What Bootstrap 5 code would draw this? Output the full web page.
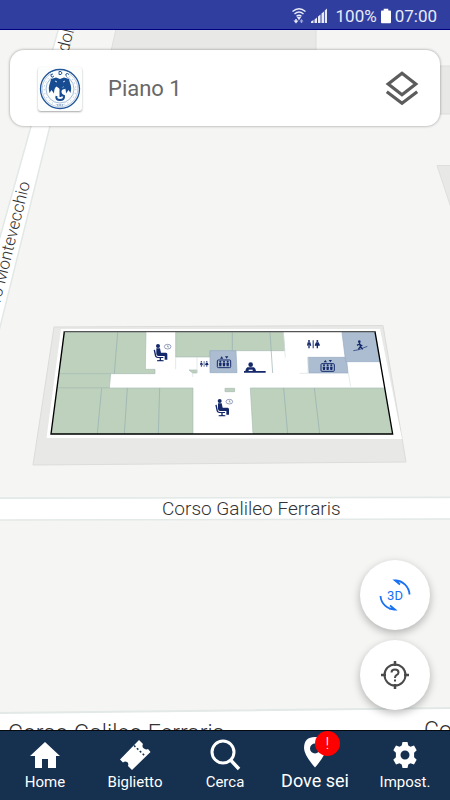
<!DOCTYPE html>
<html lang="it">
<head>
<meta charset="utf-8">
<meta name="viewport" content="width=device-width, initial-scale=1">
<title>Mappa - Piano 1</title>
<link href="https://cdn.jsdelivr.net/npm/bootstrap@5.3.0/dist/css/bootstrap.min.css" rel="stylesheet">
<style>
body { font-family: Roboto, "Liberation Sans", sans-serif; background: #f5f5f4; }
.status-bar { height: 30px; background: #303f9f; border-bottom: 1px solid #000080; color: #e8eaf6; font-size: 17px; line-height: 20px; padding: 3px 13px 0 0; }
.map-area { min-height: 0; }
.map-canvas { z-index: 0; }
.map-label { font-family: Roboto, "Open Sans", sans-serif; font-weight: 300; fill: #333; }
.floor-card { z-index: 1; margin: 20px 10px 0; height: 76px; border-radius: 14px; box-shadow: 0 0 3px rgba(0,0,0,.4); padding: 2px 20px 0 28px; }
.floor-logo { width: 44px; height: 44px; border-radius: 3px; background: #fcfefe; box-shadow: 0 1px 2px rgba(0,0,0,.35); }
.floor-title { font-size: 22px; line-height: 26px; color: #686868; margin-left: 26px; }
.fab-stack { right: 20px; bottom: 20px; z-index: 1; gap: 10px; }
.fab { width: 70px; height: 70px; box-shadow: 0 3px 9px rgba(0,0,0,.28); }
.tab-bar { height: 70px; background: #16304f; border-top: 1px solid #05080c; z-index: 2; }
.tab-item { color: #fff; font-size: 15px; line-height: 20px; padding: 7px 0; }
.tab-item.current { font-size: 18px; padding-top: 6px; }
.tab-item svg { width: 34px; height: 34px; flex: none; }
.alert-dot { width: 25px; height: 25px; background: #f00; color: #fff; font-size: 17px; font-weight: 300; line-height: 25px; left: 50%; top: 0; }
</style>
<script src="https://cdn.jsdelivr.net/npm/bootstrap@5.3.0/dist/js/bootstrap.bundle.min.js"></script>
</head>
<body class="vh-100 d-flex flex-column overflow-hidden">
<header class="status-bar d-flex align-items-center justify-content-end flex-shrink-0">
  <svg class="me-1" width="16" height="18" viewBox="0 0 16 18" fill="none" stroke="#e8eaf6" stroke-width="1.4" aria-hidden="true"><path d="M1.500 4.500Q8-1 14.500 4.500M3.500 7Q8 3 12.500 7M5.500 9.300Q8 7.300 10.500 9.300"/><path d="M7 10.500h2l-1 1.500z" fill="#e8eaf6"/><path d="M5 12v3" /><path d="M2.500 13.500h5L5 16.500z" fill="#e8eaf6" stroke="none"/><path d="M10.500 16v-2" stroke="#9fa8da"/><path d="M8.500 14.500h4l-2-2.500z" fill="#9fa8da" stroke="none"/></svg>
  <svg width="17" height="16" viewBox="0 0 17 16" fill="#e8eaf6" aria-hidden="true"><path d="M0 13.500L2.500 12v3H0zM3.500 11.500l2.500-2V15H3.500zM7 8.500l2.500-2V15H7zM10.500 5.500L13 3.500V15h-2.500zM13.800 2.500L16 .5V15h-2.200z"/></svg>
  <span class="ms-1 ps-1">100%</span>
  <svg class="mx-1" width="10" height="16" viewBox="0 0 11 16" fill="#fff" aria-hidden="true"><path d="M3 0h5v2h2q1 0 1 1v12q0 1-1 1H1q-1 0-1-1V3q0-1 1-1h2z"/></svg>
  <time>07:00</time>
</header>

<main class="map-area position-relative flex-grow-1">
  <svg class="map-canvas position-absolute top-0 start-0 w-100 h-100" viewBox="0 30 450 700" preserveAspectRatio="xMidYMid slice" role="img" aria-label="Mappa del piano 1">
    <path d="M-200 0h850v760h-850z" fill="#f5f5f4"/>
    <g fill="#e8e8e7" stroke="#dededd" stroke-width="1">
      <path d="M116 29H316V66H460V114H390L100 100z"/>
      <path d="M437 165.500H460V235z"/>
    </g>
    <path d="M0 237L30 130 61 20H76L49 130 0 327-40 488V380z" fill="#fff" stroke="#e2e8e6" stroke-width="1.500"/>
    <path d="M-200 498.500L650 497V518.500L-200 520.500z" fill="#fff" stroke="#e2e9e7" stroke-width="1.600"/>
    <path d="M-200 715L0 713 450 708 650 706V780H-200z" fill="#fff" stroke="#e2e9e7" stroke-width="2"/>
    <g class="map-label">
      <text x="162" y="515" font-size="19">Corso Galileo Ferraris</text>
      <text x="8" y="741" font-size="23">Corso Galileo Ferraris</text>
      <text x="424" y="738" font-size="23">Corso</text>
      <text transform="translate(30 183) rotate(-76)" text-anchor="end" font-size="17">ro Montevecchio</text>
      <text transform="translate(66 62) rotate(-76)" font-size="17">odol</text>
    </g>

    <path d="M54 327L383 325.500 406 462 33 465z" fill="#e8e8e7" stroke="#dcdcdb"/>
    <path d="M61 329H380L402 439 46.500 438z" fill="#fff"/>
    <g transform="translate(25 315) scale(.33333)">
      <g fill="#bed1bd" stroke="#a8bdb3" stroke-width="2">
        <path d="M118 52H363L361 163H390V176H103z"/>
        <path d="M452 52H775L779 107H555V126H452z"/>
        <path d="M103 176H257L253 219H97z"/>
        <path d="M97 219H504V356H80z"/>
        <path d="M676 219H1078L1101 356H684z"/>
        <path d="M492 165H516V174H503zM600 220H629V230H600z"/>
      </g>
      <g fill="#acbdd1" stroke="#95abc1" stroke-width="2">
        <path d="M555 107H633L636 173H555z"/>
        <path d="M849 127H964L969 174H852z"/>
        <path d="M951 52H1050L1064 140H962z"/>
      </g>
      <path d="M278 52L268 176M230 219L217 356M307 219L298 356M404 219L400 356M622 52V107M735 52L743 174M776 219L788 356M868 219L884 356" fill="none" stroke="#94adb0" stroke-width="2"/>
      <path d="M516 126V174M452 126V163M775 52L781 128M849 127V174M970 174L977 215M503 174V186M824 175H852" fill="none" stroke="#d5dfe3" stroke-width="2"/>
      <path d="M118 50L78 357H1103L1050 50" fill="none" stroke="#000" stroke-width="4"/>
      <path d="M116 50H1052" stroke="#555" stroke-width="4"/>
      <defs>
        <g id="waiting" fill="#14286a">
          <circle cx="13" cy="6" r="6"/>
          <path d="M8 13L19 13 22 26H37Q41 26 41 31V47H33V36H14Q9 36 8 30z"/>
          <path d="M0 18L4 17 8 36Q10 39 14 39H29V42H22V48L30 49V52H10V49L18 48V42H12Q6 42 4 37z"/>
          <path d="M32 8Q32 1 42 1T52 8 42 15 32 8zM42 4V9H46" fill="none" stroke="#62719b" stroke-width="2"/>
        </g>
        <g id="lift">
          <path d="M4 12H38Q41 12 41 15V32Q41 35 38 35H4Q1 35 1 32V15Q1 12 4 12z" fill="none" stroke="#14286a" stroke-width="3"/>
          <path d="M9 8L14 1 19 8zM24 1H34L29 8z" fill="#14286a"/>
          <g fill="#14286a"><circle cx="10" cy="17" r="3"/><circle cx="21" cy="17" r="3"/><circle cx="32" cy="17" r="3"/><path d="M6 21H14L13 31H7zM17 21H25L24 31H18zM28 21H36L35 31H29z"/></g>
        </g>
        <g id="restroom" fill="#14286a">
          <circle cx="6" cy="3" r="3"/><path d="M2 7H10L13 17 10 18 8 13 8 25H4V13L2 18 0 16z"/>
          <path d="M17 1H20V25H17z"/>
          <circle cx="31" cy="3" r="3"/><path d="M27 7H35L39 16 36 18 35 17H33V25H29V17H27L25 18 23 16z"/>
        </g>
      </defs>
      <use href="#waiting" x="386" y="87"/>
      <use href="#waiting" x="571" y="252"/>
      <use href="#lift" x="576" y="123"/>
      <use href="#lift" x="887" y="134"/>
      <use href="#restroom" x="846" y="75"/>
      <use href="#restroom" transform="translate(525 138) scale(.66 .7)"/>
      <g fill="#14286a"><circle cx="677" cy="149" r="7"/><path d="M667 157H687Q692 161 693 168H722V173H657V168H661Q662 160 667 157z"/><path d="M671 164H683V168H671z" fill="#fff"/></g>
      <g fill="none" stroke="#14286a" stroke-width="4"><circle cx="1003" cy="80" r="2"/><path d="M1003 84L1007 96 1013 103M1006 95L1000 103M996 91L1003 87 1012 93"/><path d="M985 107L1002 104 1027 94" stroke-width="2"/></g>
    </g>
  </svg>

  <section class="floor-card bg-white position-relative d-flex align-items-center">
    <div class="floor-logo d-flex align-items-center justify-content-center flex-shrink-0">
      <svg width="42" height="42" viewBox="0 0 42 42" fill="none" stroke="#24569a" aria-hidden="true">
        <circle cx="21" cy="21" r="19.500" stroke-width="1.300"/><circle cx="21" cy="21" r="17.800" stroke-width=".5" stroke="#7f9fc8"/>
        <circle cx="21" cy="21" r="14" stroke-width=".7" stroke="#7f9fc8"/><circle cx="21" cy="21" r="15.800" stroke-width=".7" stroke="#7f9fc8" stroke-dasharray="1 3"/>
        <path d="M12 4.500Q21 1 30 4.500V9H12z" fill="#fcfefe" stroke="none"/>
        <g stroke-width="1"><path d="M14 6q-3 0-2 2t3 0M20 3.500h2q2 1.500 0 3h-2zM30 6.500q-2-2-3-.5t1 2.500"/></g>
        <path d="M17 9.500L21 11 25 9.500 30 11 31 15Q33 19 31.500 25L29.500 22 27 25.500Q27 20 24.500 18.500L21 21 17.500 18.500Q15 20 15 25.500L12.500 22 10.500 25Q9 19 11 15L12 11z" fill="#174c92" stroke="none"/>
        <path d="M16 13l2 1M26 13l-2 1" stroke="#fff" stroke-width=".8"/>
        <path d="M26 20Q21.500 20 21.500 23.500T25 28Q25.500 32 21 32T17.500 28M21.500 17V29" stroke="#174c92" stroke-width="2"/>
        <path d="M18 37h6" stroke-width=".8" stroke-dasharray="1.500 .8"/>
      </svg>
    </div>
    <h1 class="floor-title fw-normal mb-0 me-auto">Piano 1</h1>
    <button type="button" class="btn border-0 p-0 lh-1" aria-label="Scegli piano">
      <svg width="36" height="36" viewBox="0 0 36 36" fill="none" stroke="#5c5c5c" stroke-width="3.200" aria-hidden="true"><path d="M18 2.300L31.800 13 18 23.700 4.200 13z"/><path d="M2.800 20.800L18 32.200 33.200 20.800"/></svg>
    </button>
  </section>

  <div class="fab-stack position-absolute d-flex flex-column">
    <button type="button" class="fab btn bg-white border-0 rounded-circle p-0" aria-label="Vista 3D">
      <svg width="34" height="34" viewBox="0 0 34 34" fill="none" stroke="#1872f2" stroke-width="1.800" aria-hidden="true"><path d="M31.500 16.500A14.500 14.500 0 0 0 17 2.500L22 6.500M17.500 2.500L23 3.500M2.500 18A14.500 14.500 0 0 0 17 31.500L12 27.500M16.500 31.500L11 30.500"/><text x="17" y="22" text-anchor="middle" font-size="13" fill="#1872f2" stroke="none">3D</text></svg>
    </button>
    <button type="button" class="fab btn bg-white border-0 rounded-circle p-0" aria-label="La mia posizione">
      <svg width="30" height="30" viewBox="0 0 30 30" fill="none" stroke="#4a4a4a" stroke-width="2" aria-hidden="true"><circle cx="15" cy="15" r="10.500"/><path d="M15 1V6M15 24V29M1 15H6M24 15H29" stroke-width="2.500"/><path d="M11.500 12.500Q11.500 9.500 15 9.500T18.500 12.500Q18.500 14 16.500 15.200 15 16.200 15 18M15 19.500V21.500"/></svg>
    </button>
  </div>
</main>

<nav class="tab-bar row g-0 flex-shrink-0 position-relative text-center" aria-label="Principale">
  <a href="#" class="tab-item col d-flex flex-column align-items-center text-decoration-none">
    <svg viewBox="0 0 34 34" fill="#fff" aria-hidden="true"><path d="M17 4L32 18H28V30H20V21H14V30H7V18H2z"/></svg>
    <span>Home</span>
  </a>
  <a href="#" class="tab-item col d-flex flex-column align-items-center text-decoration-none">
    <svg viewBox="0 0 34 34" fill="#fff" aria-hidden="true"><path d="M21 2L25 6Q23.500 9 26 10.500T30 11L32.500 14 14 32 10 28Q11 25 9 24T5 24.500L2 21.500z"/><path d="M16 7.500L27 18" stroke="#16304f" stroke-width="1.500" stroke-dasharray="2 2"/></svg>
    <span>Biglietto</span>
  </a>
  <a href="#" class="tab-item col d-flex flex-column align-items-center text-decoration-none">
    <svg viewBox="0 0 34 34" fill="none" stroke="#fff" aria-hidden="true"><circle cx="15" cy="14" r="11" stroke-width="3"/><path d="M22.500 22L31 31" stroke-width="3.500"/></svg>
    <span>Cerca</span>
  </a>
  <a href="#" class="tab-item current col d-flex flex-column align-items-center text-decoration-none position-relative" aria-current="page">
    <svg viewBox="0 0 34 34" fill="#fff" fill-rule="evenodd" aria-hidden="true"><path d="M17 0Q6 0 6 11Q6 18 17 30.500Q28 18 28 11Q28 0 17 0zM17 6.500A5 5 0 0 1 17 16.500A5 5 0 0 1 17 6.500z"/></svg>
    <span class="alert-dot position-absolute rounded-circle">!</span>
    <span>Dove sei</span>
  </a>
  <a href="#" class="tab-item col d-flex flex-column align-items-center text-decoration-none">
    <svg viewBox="0 0 34 34" fill="#fff" fill-rule="evenodd" aria-hidden="true"><path d="M14.500 4h5l.8 3.600 2.200 1.200 3.500-1.200 2.700 4.700-2.600 2.400v4.600l2.600 2.400-2.700 4.700-3.500-1.200-2.200 1.200-.8 3.600h-5l-.8-3.600-2.200-1.200L8 26.400l-2.700-4.700 2.600-2.400v-4.600l-2.600-2.400L8 7.600l3.500 1.200 2.200-1.200zM17 12.500A4.500 4.500 0 0 1 17 21.500A4.500 4.500 0 0 1 17 12.500z"/></svg>
    <span>Impost.</span>
  </a>
</nav>
</body>
</html>
